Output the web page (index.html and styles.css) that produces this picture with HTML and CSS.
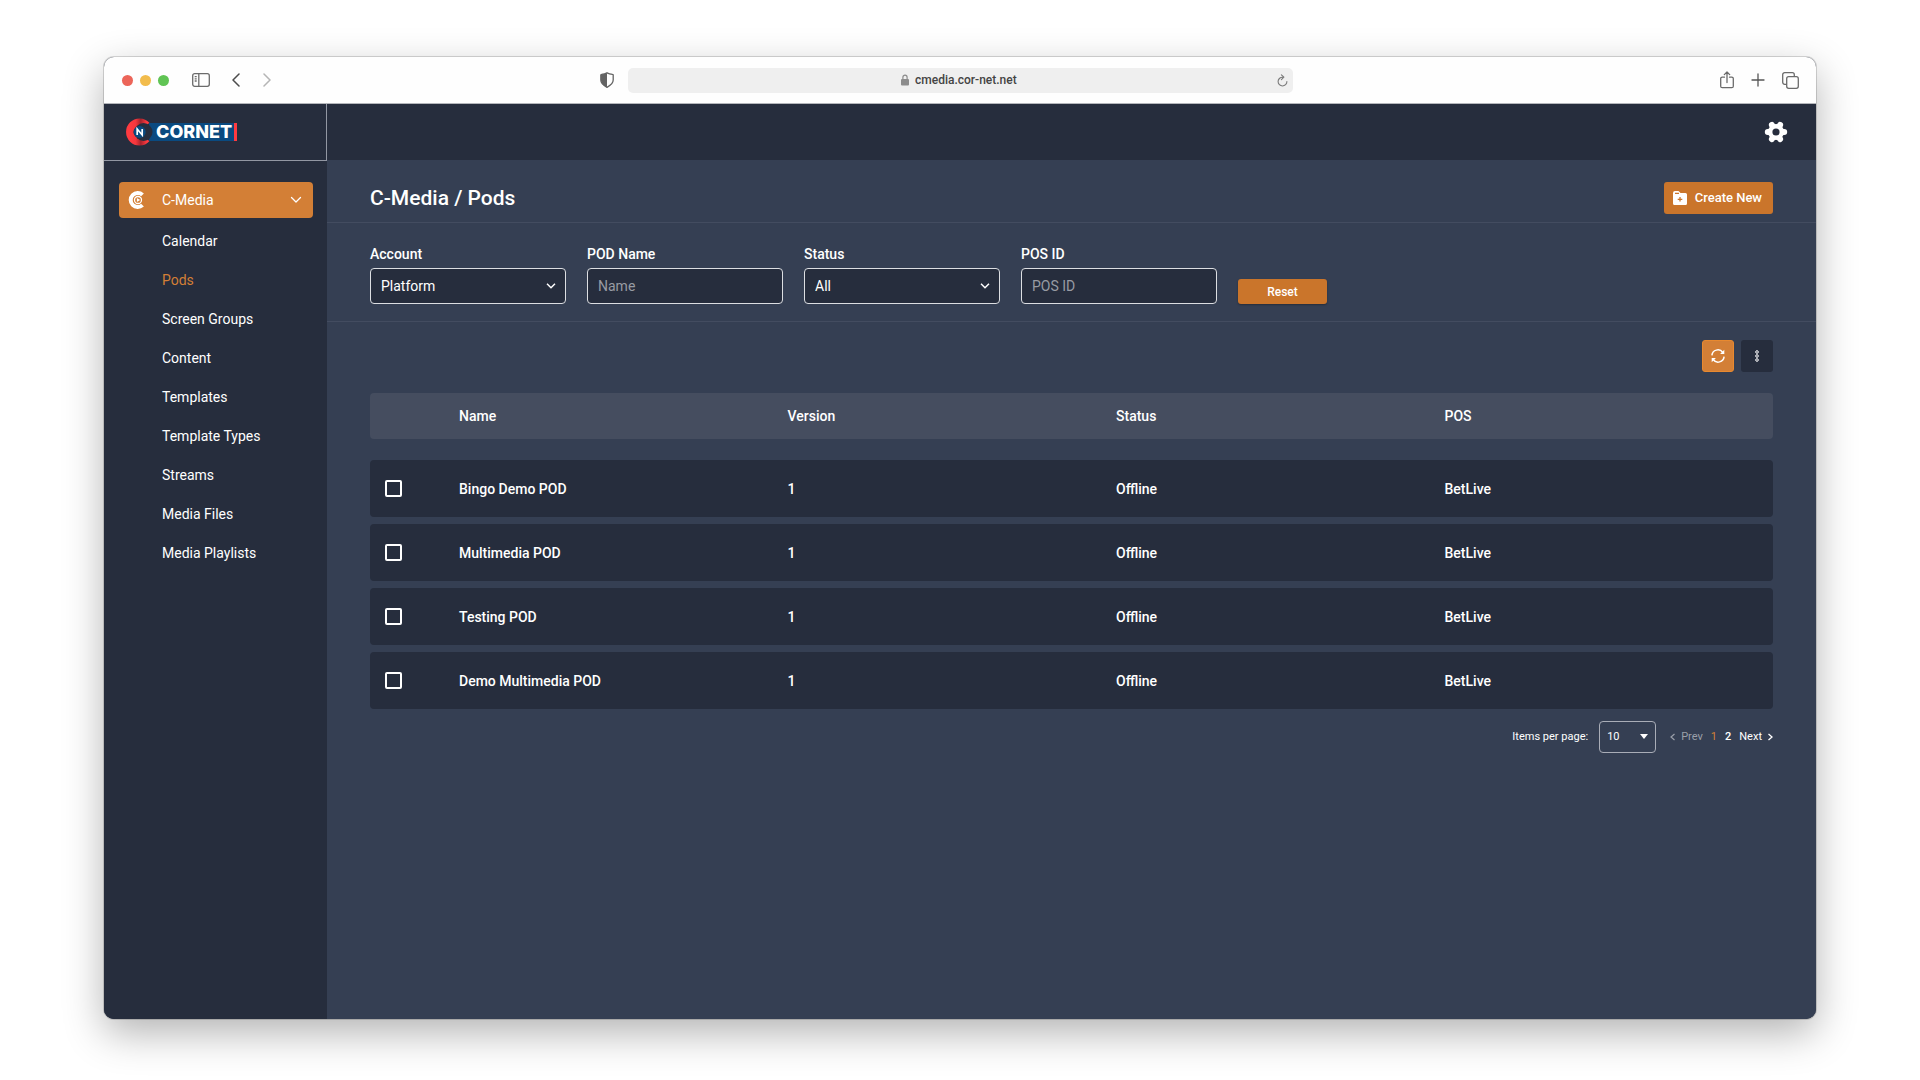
FILE: index.html
```html
<!DOCTYPE html>
<html lang="en">
<head>
<meta charset="utf-8">
<title>C-Media / Pods</title>
<link rel="stylesheet" href="styles.css">
</head>
<body>
<div class="window">
  <div class="chrome">
    <div class="chrome-left">
      <div class="lights"><span class="light red"></span><span class="light yellow"></span><span class="light green"></span></div>
      <button class="icon-btn sidebar-btn" aria-label="Toggle sidebar"><svg width="18" height="14" viewBox="0 0 18 14" fill="none" stroke="#6b6b6b" stroke-width="1.3"><rect x=".7" y=".7" width="16.6" height="12.6" rx="2"/><path d="M6.8 1v12M2.7 3.6h2M2.7 5.8h2M2.7 8h2"/></svg></button>
      <button class="icon-btn back-btn" aria-label="Back"><svg width="8" height="14" viewBox="0 0 8 14" fill="none" stroke="#4c4c4c" stroke-width="1.5" stroke-linecap="round" stroke-linejoin="round"><path d="M7 1 1 7l6 6"/></svg></button>
      <button class="icon-btn" aria-label="Forward"><svg width="8" height="14" viewBox="0 0 8 14" fill="none" stroke="#b5b5b5" stroke-width="1.5" stroke-linecap="round" stroke-linejoin="round"><path d="m1 1 6 6-6 6"/></svg></button>
      <button class="icon-btn shield-btn" aria-label="Privacy report"><svg width="14" height="16" viewBox="0 0 14 16"><path d="M7 .8c2 1 3.800 1.300 5.500 1.500.4 0 .7.400.7.800v5c0 3-2.200 5.200-6.200 7.200C3 13.300.8 11.100.8 8.100v-5c0-.4.3-.8.7-.8C3.200 2.100 5 1.800 7 .8Z" fill="none" stroke="#636363" stroke-width="1.300"/><path d="M7 1C5 2 3 2.300 1 2.500v6c0 3 2.500 5 6 6.800Z" fill="#636363"/></svg></button>
    </div>
    <div class="address">
      <svg width="8" height="12" viewBox="0 0 8 12"><path d="M1.900 5.500V3.200a2.100 2.100 0 0 1 4.200 0v2.300" fill="none" stroke="#8c8c8c" stroke-width="1.200"/><rect y="5" width="8" height="6.500" rx="1" fill="#8c8c8c"/></svg>
      <input class="url" type="text" aria-label="Address" value="cmedia.cor-net.net">
      <button class="icon-btn reload-btn" aria-label="Reload"><svg width="11" height="13" viewBox="0 0 11 13" fill="none" stroke="#7a7a7a" stroke-width="1.100" stroke-linecap="round" stroke-linejoin="round"><path d="M5.500 3.200A4.400 4.400 0 1 0 9.900 7.600M4.400.8l2.500 2.400-2.500 2.400"/></svg></button>
    </div>
    <div class="chrome-right">
      <button class="icon-btn" aria-label="Share"><svg width="14" height="18" viewBox="0 0 14 18" fill="none" stroke="#6b6b6b" stroke-width="1.300" stroke-linecap="round" stroke-linejoin="round"><path d="M4.500 6.200H2.200c-.8 0-1.500.6-1.500 1.400v7.600c0 .8.7 1.500 1.500 1.500h9.600c.8 0 1.500-.7 1.500-1.500V7.600c0-.8-.7-1.400-1.500-1.400H9.500M7 11.500V1M4.300 3.600 7 1l2.700 2.600"/></svg></button>
      <button class="icon-btn" aria-label="New tab"><svg width="14" height="14" viewBox="0 0 14 14" fill="none" stroke="#555" stroke-width="1.300" stroke-linecap="round"><path d="M7 1v12M1 7h12"/></svg></button>
      <button class="icon-btn" aria-label="Show tabs"><svg width="17" height="17" viewBox="0 0 17 17" fill="none" stroke="#6b6b6b" stroke-width="1.300"><rect x="4.700" y="4.700" width="11.600" height="11.600" rx="2"/><path d="M4.700 12.300H2.700a2 2 0 0 1-2-2V2.700a2 2 0 0 1 2-2h7.600a2 2 0 0 1 2 2v2"/></svg></button>
    </div>
  </div>

  <div class="app">
    <aside class="sidebar">
      <a class="logo" href="#">
        <svg class="logo-mark" width="28" height="28" viewBox="0 0 28 28">
          <defs><linearGradient id="mark" x1="0" y1="0" x2="1" y2="0"><stop offset="0" stop-color="#ff3a40"/><stop offset=".35" stop-color="#f5373d"/><stop offset=".65" stop-color="#a5232c"/><stop offset="1" stop-color="#ff3a40"/></linearGradient></defs>
          <path d="M20.700 7.300A9.800 9.800 0 1 0 20.700 20.700" fill="none" stroke="url(#mark)" stroke-width="7.400"/>
          <circle cx="17.500" cy="14" r="9" fill="#262d3d"/>
          <circle cx="13.700" cy="14" r="6" fill="#0a4a80"/>
          <path d="M11.200 17v-6l5 6v-6" fill="none" stroke="#fff" stroke-width="1.700"/>
        </svg>
        <span class="logo-name">CORNET</span>
      </a>
      <nav class="menu">
        <button class="menu-head">
          <svg width="18" height="20" viewBox="0 0 18 20" fill="none"><path d="M14.500 4.900A7 7 0 1 0 14.500 15.100" stroke="#fff" stroke-width="4"/><circle cx="10" cy="10" r="4.600" fill="#d37f36"/><circle cx="10" cy="10" r="3.500" stroke="#fff" stroke-width="1.300"/><path d="m8.900 7.900 3.300 2.100-3.300 2.100Z" fill="#fff"/></svg>
          <span>C-Media</span>
          <svg class="chev" width="12" height="8" viewBox="0 0 12 8" fill="none" stroke="#fff" stroke-width="1.300" stroke-linecap="round" stroke-linejoin="round"><path d="m1.500 1.500 4.500 4.500 4.500-4.500"/></svg>
        </button>
        <a href="#">Calendar</a>
        <a href="#" class="current">Pods</a>
        <a href="#">Screen Groups</a>
        <a href="#">Content</a>
        <a href="#">Templates</a>
        <a href="#">Template Types</a>
        <a href="#">Streams</a>
        <a href="#">Media Files</a>
        <a href="#">Media Playlists</a>
      </nav>
    </aside>

    <main class="main">
      <header class="topbar">
        <button class="icon-btn" aria-label="Settings"><svg width="24" height="24" viewBox="0 0 24 24"><path d="M3.800 12h16.400M7.900 4.900l8.200 14.200M16.100 4.900 7.900 19.100" stroke="#fff" stroke-width="6" stroke-linecap="round"/><circle cx="12" cy="12" r="8" fill="#fff"/><circle cx="12" cy="12" r="3.600" fill="#262d3d"/></svg></button>
      </header>

      <section class="title-row">
        <h1>C-Media / Pods</h1>
        <button class="create"><svg width="14" height="14" viewBox="0 0 14 14"><path d="M2 0h3.500L7.500 2h5A1.500 1.500 0 0 1 14 3.500v9a1.500 1.500 0 0 1-1.500 1.500h-11A1.500 1.500 0 0 1 0 12.500V2A2 2 0 0 1 2 0Z" fill="#fff"/><path d="M2 2.400h4M7 6v4.600M4.700 8.300h4.600" stroke="#ca752b" stroke-width="1.300"/></svg>Create New</button>
      </section>

      <form class="filters">
        <div class="field">
          <label for="account">Account</label>
          <div class="select"><select id="account"><option>Platform</option></select><svg width="10" height="6" viewBox="0 0 10 6" fill="none" stroke="#fff" stroke-width="1.500"><path d="m1 .8 4 4 4-4"/></svg></div>
        </div>
        <div class="field">
          <label for="pod">POD Name</label>
          <input id="pod" type="text" placeholder="Name">
        </div>
        <div class="field">
          <label for="status">Status</label>
          <div class="select"><select id="status"><option>All</option></select><svg width="10" height="6" viewBox="0 0 10 6" fill="none" stroke="#fff" stroke-width="1.500"><path d="m1 .8 4 4 4-4"/></svg></div>
        </div>
        <div class="field">
          <label for="pos">POS ID</label>
          <input id="pos" type="text" placeholder="POS ID">
        </div>
        <button class="reset" type="reset">Reset</button>
      </form>

      <section class="content">
        <div class="actions">
          <button class="square refresh" aria-label="Refresh"><svg width="14" height="14" viewBox="0 0 14 14" fill="none" stroke="#fff" stroke-width="1.500"><path d="M.9 6.300A6 6 0 0 1 11.800 3.500M13.100 7.700A6 6 0 0 1 2.200 10.500"/><path d="M13.300.7v4.200H9.100ZM.7 13.300V9.100h4.200Z" fill="#fff" stroke="none"/></svg></button>
          <button class="square more" aria-label="More"><svg width="4" height="12" viewBox="0 0 4 12" fill="none" stroke="#fff" stroke-width="1"><circle cx="2" cy="2" r="1.300"/><circle cx="2" cy="6" r="1.300"/><circle cx="2" cy="10" r="1.300"/></svg></button>
        </div>

        <table class="pods">
          <thead><tr><th class="check"></th><th>Name</th><th>Version</th><th>Status</th><th>POS</th></tr></thead>
          <tbody>
            <tr><td class="check"><input type="checkbox" aria-label="Select Bingo Demo POD"></td><td>Bingo Demo POD</td><td>1</td><td>Offline</td><td>BetLive</td></tr>
            <tr><td class="check"><input type="checkbox" aria-label="Select Multimedia POD"></td><td>Multimedia POD</td><td>1</td><td>Offline</td><td>BetLive</td></tr>
            <tr><td class="check"><input type="checkbox" aria-label="Select Testing POD"></td><td>Testing POD</td><td>1</td><td>Offline</td><td>BetLive</td></tr>
            <tr><td class="check"><input type="checkbox" aria-label="Select Demo Multimedia POD"></td><td>Demo Multimedia POD</td><td>1</td><td>Offline</td><td>BetLive</td></tr>
          </tbody>
        </table>

        <div class="pager">
          <label for="per-page">Items per page:</label>
          <div class="select small"><select id="per-page"><option>10</option></select><svg width="8" height="5" viewBox="0 0 8 5"><path d="M0 0h8L4 5Z" fill="#fff"/></svg></div>
          <a class="prev" href="#"><svg width="5" height="8" viewBox="0 0 5 8" fill="none" stroke="currentColor" stroke-width="1.200"><path d="M4.500 1 1 4l3.500 3"/></svg>Prev</a>
          <a class="page on" href="#">1</a>
          <a class="page" href="#">2</a>
          <a class="next" href="#">Next<svg width="5" height="8" viewBox="0 0 5 8" fill="none" stroke="currentColor" stroke-width="1.300"><path d="M.5 1 4 4 .5 7"/></svg></a>
        </div>
      </section>
    </main>
  </div>
</div>
</body>
</html>
```
FILE: styles.css
```css
* { box-sizing: border-box; }

body {
  margin: 0;
  padding: 57px 104px 61px;
  min-height: 100vh;
  display: flex;
  background: #fff;
  color: #fff;
  font: 14px/20px Roboto, "Liberation Sans", sans-serif;
}

button, input, select { font: inherit; color: inherit; }
button { cursor: pointer; }
a { color: inherit; text-decoration: none; }
svg { display: block; flex: none; }

.window {
  flex: 1;
  display: flex;
  flex-direction: column;
  border-radius: 10px;
  overflow: hidden;
  background: #262d3d;
  box-shadow: 0 0 0 1px rgba(0, 0, 0, .15), 0 14px 40px rgba(0, 0, 0, .3);
}

/* Browser toolbar */
.chrome {
  height: 47px;
  display: grid;
  grid-template-columns: 1fr minmax(0, 665px) 1fr;
  align-items: center;
  background: #fefefe;
  border-bottom: 1px solid #b4b6bb;
}
.icon-btn { padding: 0; border: 0; background: none; }
.chrome-left { display: flex; align-items: center; padding-left: 18px; }
.lights { display: flex; gap: 7px; }
.light { width: 11px; height: 11px; border-radius: 50%; }
.red { background: #ec6559; }
.yellow { background: #f2bc4c; }
.green { background: #60c454; }
.sidebar-btn { margin: 0 22px 0 23px; }
.back-btn { margin-right: 23px; }
.shield-btn { margin: 0 14px 0 auto; }
.address {
  position: relative;
  height: 25px;
  display: flex;
  align-items: center;
  justify-content: center;
  gap: 6px;
  border-radius: 5px;
  background: #efefef;
}
.url {
  width: 104px;
  padding: 0;
  border: 0;
  outline: 0;
  background: none;
  color: #444;
  font-size: 12px;
  font-weight: 500;
}
.reload-btn { position: absolute; right: 5px; }
.chrome-right { display: flex; align-items: center; justify-content: flex-end; gap: 17px; padding-right: 17px; }

/* Application frame */
.app { flex: 1; display: flex; background: #353f53; }
.sidebar { width: 223px; flex: none; background: #262d3d; }
.main { flex: 1; min-width: 0; }
.logo {
  height: 57px;
  display: flex;
  align-items: center;
  padding-left: 22px;
  border-right: 1px solid #9297a3;
  border-bottom: 1px solid #9297a3;
}
.logo-mark { z-index: 1; }
.logo-name {
  height: 18px;
  margin-left: -5px;
  padding: 0 2px 0 7px;
  background: #0a4a80;
  border-right: 3px solid #ff3a40;
  font: 800 18px/18px Inter, sans-serif;
}
.menu { display: flex; flex-direction: column; padding: 21px 14px 21px 15px; }
.menu-head {
  height: 36px;
  display: flex;
  align-items: center;
  gap: 16px;
  margin-bottom: 3px;
  padding: 0 11px 0 9px;
  border: 0;
  border-radius: 4px;
  background: #d37f36;
}
.chev { margin-left: auto; }
.menu a { padding: 10px 0 9px 43px; }
.menu .current { color: #d37f36; }

.topbar {
  height: 56px;
  display: flex;
  align-items: center;
  justify-content: flex-end;
  padding-right: 28px;
  background: #262d3d;
}
.title-row {
  height: 63px;
  display: flex;
  align-items: center;
  justify-content: space-between;
  padding: 13px 43px 0;
  border-bottom: 1px solid #434c60;
}
h1 { margin: 0; font-size: 21px; line-height: 28px; font-weight: 500; }
.create {
  height: 32px;
  display: flex;
  align-items: center;
  gap: 8px;
  padding: 0 11px 0 9px;
  border: 0;
  border-radius: 3px;
  background: #ca752b;
  font-size: 13px;
  font-weight: 500;
}

/* Filters */
.filters {
  display: flex;
  align-items: flex-end;
  gap: 21px;
  padding: 21px 43px 17px;
  border-bottom: 1px solid #434c60;
}
.field { width: 196px; display: flex; flex-direction: column; gap: 4px; }
.field label { font-weight: 500; }
.field input, .select select {
  width: 100%;
  height: 36px;
  padding: 0 10px;
  border: 1px solid #dcdee2;
  border-radius: 4px;
  background: #262d3d;
  appearance: none;
}
.field input::placeholder { color: #989ba3; opacity: 1; }
.select { position: relative; }
.select svg { position: absolute; right: 10px; top: 50%; margin-top: -3px; pointer-events: none; }
.reset {
  width: 89px;
  height: 25px;
  padding: 0;
  border: 0;
  border-radius: 3px;
  background: #ca752b;
  box-shadow: 0 1px 2px rgba(0, 0, 0, .3);
  font-size: 12px;
  font-weight: 500;
}

/* Table */
.content { padding: 18px 43px; }
.actions { display: flex; justify-content: flex-end; gap: 7px; margin-bottom: 14px; }
.square {
  width: 32px;
  height: 32px;
  display: grid;
  place-items: center;
  padding: 0;
  border: 0;
  border-radius: 3px;
}
.refresh { background: #d37f36; border: 1px solid #e8892f; }
.more { background: #262d3d; }
.pods { width: 100%; table-layout: fixed; border-collapse: separate; border-spacing: 0 7px; }
.pods th, .pods td { padding: 0; text-align: left; font-weight: 500; }
.pods th { height: 46px; background: #454d5f; }
.pods td { height: 57px; background: #262d3d; }
.pods tbody::before { content: ""; display: table-row; height: 7px; }
.pods .check { width: 89px; padding-left: 15px; }
.pods tr > :first-child { border-radius: 4px 0 0 4px; }
.pods tr > :last-child { border-radius: 0 4px 4px 0; }
.check input {
  display: block;
  width: 17px;
  height: 17px;
  margin: 0;
  border: 2px solid #fff;
  border-radius: 2px;
  appearance: none;
}

.pager {
  display: flex;
  align-items: center;
  justify-content: flex-end;
  margin-top: 5px;
  font-size: 11px;
}
.select.small { width: 57px; margin: 0 14px 0 11px; }
.small select { height: 32px; padding: 0 7px; background: none; border-color: #a9adb7; }
.small svg { right: 8px; }
.prev, .next { display: flex; align-items: center; gap: 6px; }
.prev { color: #9a9fa9; }
.page { margin-left: 8px; font-weight: 500; }
.on { color: #d37f36; font-weight: 400; }
.next { margin-left: 8px; }
```
